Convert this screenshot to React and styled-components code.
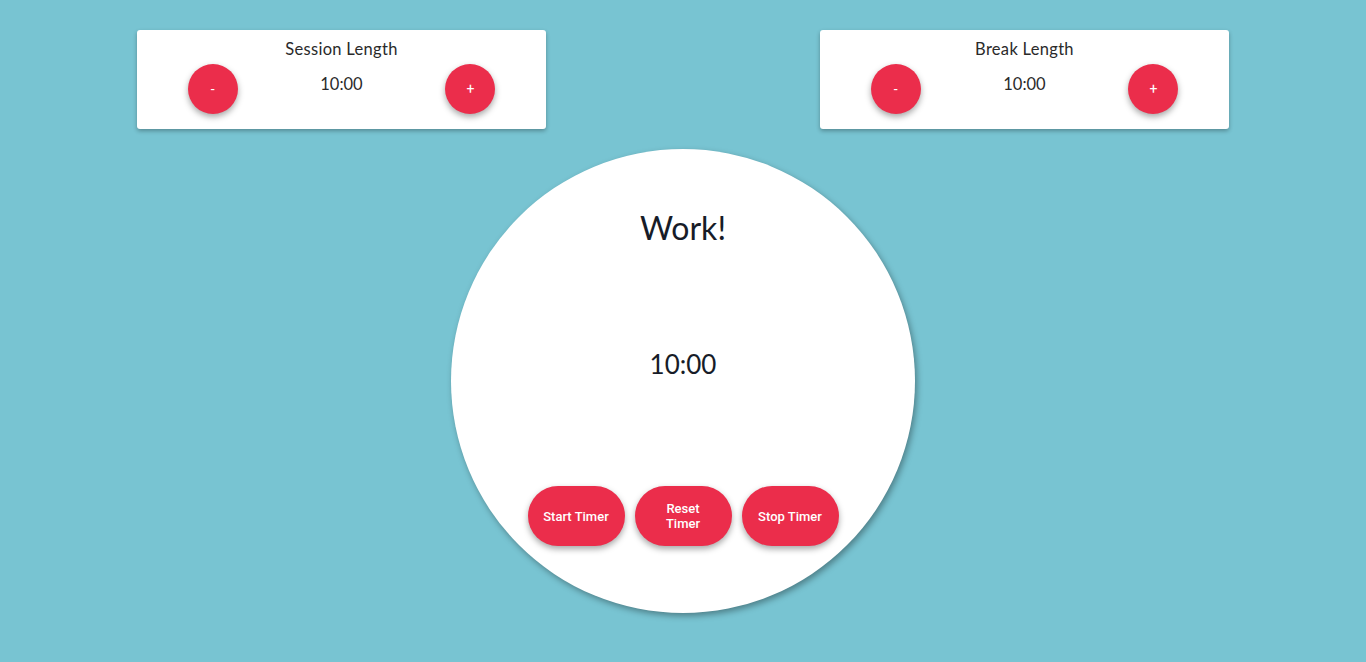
import React, { useState } from 'react';
import styled, { createGlobalStyle } from 'styled-components';

const GlobalStyle = createGlobalStyle`
  html, body {
    margin: 0;
    padding: 0;
    background-color: #78c4d2;
    font-family: 'Lato', 'Open Sans', sans-serif;
  }
`;

const Page = styled.div`
  width: 100%;
  min-height: 662px;
  padding-top: 30px;
  box-sizing: border-box;
`;

const Settings = styled.div`
  display: grid;
  grid-template-columns: 1fr 1fr;
`;

const Card = styled.div`
  width: 60%;
  justify-self: center;
  background-color: #fff;
  border-radius: 3px;
  box-shadow: 0 2px 4px rgba(0, 0, 0, 0.3);
  padding: 9px 51px 15px;
  box-sizing: border-box;
  text-align: center;
`;

const CardTitle = styled.div`
  font-size: 16.5px;
  color: #2a2a2a;
  line-height: 20px;
  margin-bottom: 5px;
  letter-spacing: 0.3px;
`;

const Controls = styled.div`
  display: flex;
  justify-content: space-between;
  align-items: flex-start;
`;

const Value = styled.div`
  font-size: 16.5px;
  color: #2a2a2a;
  line-height: 20px;
  padding-top: 10px;
`;

const RoundButton = styled.button`
  width: 50px;
  height: 50px;
  border-radius: 50%;
  border: none;
  background-color: #eb2d4b;
  color: #fff;
  font-family: 'Roboto', 'Liberation Sans', sans-serif;
  font-size: 14px;
  box-shadow: 0 3px 6px rgba(0, 0, 0, 0.35);
  cursor: pointer;
  padding: 0;
`;

const Clock = styled.div`
  width: 464px;
  height: 464px;
  margin: 20px auto 0;
  border-radius: 50%;
  background-color: #fff;
  box-shadow: 2px 3px 6px rgba(0, 0, 0, 0.35);
  display: flex;
  flex-direction: column;
  align-items: center;
  box-sizing: border-box;
  padding-top: 59px;
`;

const Mode = styled.div`
  font-size: 32px;
  color: #171c28;
  line-height: 40px;
  height: 40px;
`;

const Time = styled.div`
  font-size: 26px;
  color: #171c28;
  line-height: 32px;
  margin-top: 100px;
`;

const Actions = styled.div`
  display: flex;
  gap: 10px;
  margin-top: 106px;
`;

const PillButton = styled.button`
  width: 97px;
  height: 60px;
  border-radius: 30px;
  border: none;
  background-color: #eb2d4b;
  color: #fff;
  font-family: 'Roboto', 'Liberation Sans', sans-serif;
  font-weight: 500;
  font-size: 13px;
  line-height: 15px;
  box-shadow: 0 3px 6px rgba(0, 0, 0, 0.35);
  cursor: pointer;
  padding: 0 14px;
`;

const LengthCard = ({ title, value, onMinus, onPlus }) => (
  <Card>
    <CardTitle>{title}</CardTitle>
    <Controls>
      <RoundButton onClick={onMinus}>-</RoundButton>
      <Value>{value}</Value>
      <RoundButton onClick={onPlus}>+</RoundButton>
    </Controls>
  </Card>
);

const fmt = (m) => `${m}:00`;

const App = () => {
  const [session, setSession] = useState(10);
  const [brk, setBrk] = useState(10);

  return (
    <Page>
      <GlobalStyle />
      <Settings>
        <LengthCard
          title="Session Length"
          value={fmt(session)}
          onMinus={() => setSession((s) => Math.max(1, s - 1))}
          onPlus={() => setSession((s) => s + 1)}
        />
        <LengthCard
          title="Break Length"
          value={fmt(brk)}
          onMinus={() => setBrk((b) => Math.max(1, b - 1))}
          onPlus={() => setBrk((b) => b + 1)}
        />
      </Settings>
      <Clock>
        <Mode>Work!</Mode>
        <Time>{fmt(session)}</Time>
        <Actions>
          <PillButton>Start Timer</PillButton>
          <PillButton>Reset Timer</PillButton>
          <PillButton>Stop Timer</PillButton>
        </Actions>
      </Clock>
    </Page>
  );
};

export default App;
